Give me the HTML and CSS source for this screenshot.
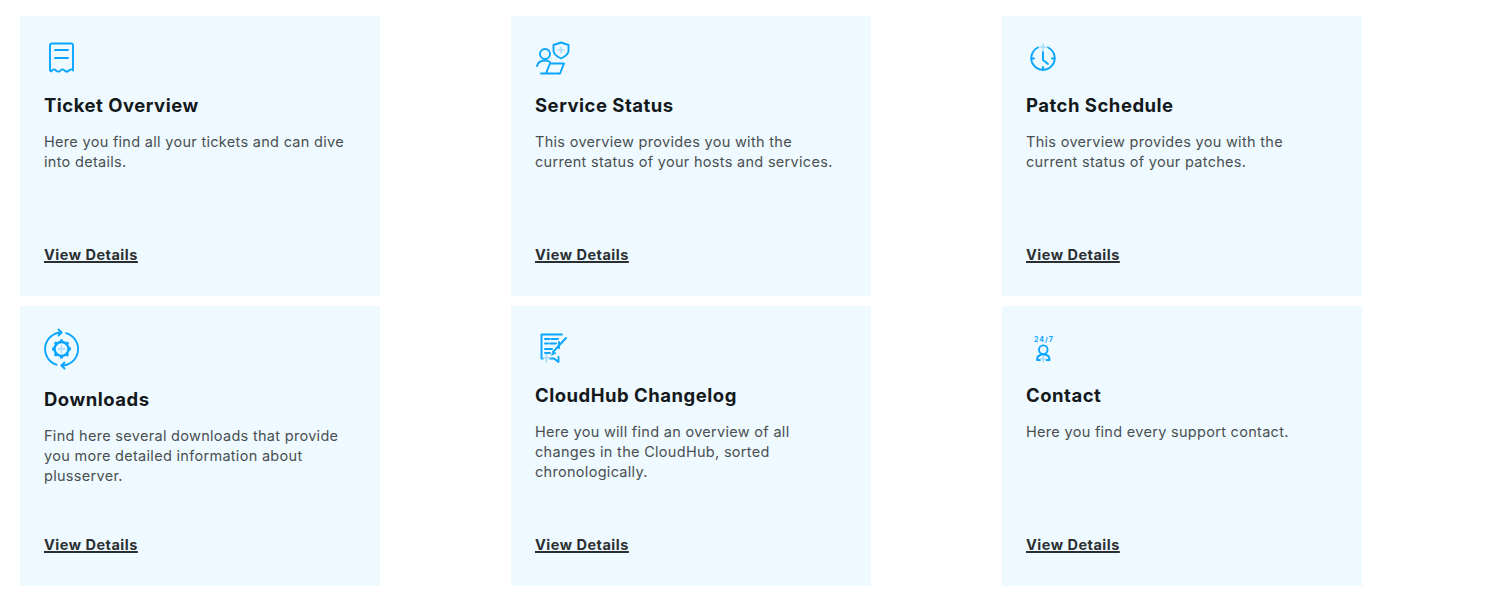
FILE: index.html
```html
<!DOCTYPE html>
<html lang="en">
<head>
<meta charset="utf-8">
<title>Support</title>
<link rel="stylesheet" href="styles.css">
</head>
<body>
<main class="grid">
  <article class="card">
    <svg class="icon" width="40" height="40" viewBox="0 0 40 40" fill="none"><path class="s" d="M6 29.500V4.500A2 2 0 0 1 8 2.500H27A2 2 0 0 1 29 4.500V29.500C28 28 26.500 28 25 29.500S22 31 20.500 29.500 17.500 28 16.500 29.500 13.500 31 12 29.500 9 28 8 29.500 6.800 30.500 6 29.500Z"/><path class="s" d="M11 9H24M11 17H24"/></svg>
    <h2>Ticket Overview</h2>
    <p>Here you find all your tickets and can dive into details.</p>
    <a href="#">View Details</a>
  </article>
  <article class="card">
    <svg class="icon" width="40" height="40" viewBox="0 0 40 40" fill="none"><circle class="s" cx="10" cy="13" r="5"/><path class="s" d="M2 25C3 21 6 19.500 10 19.500 12 19.500 13.500 20 15 21"/><path class="s" d="M15 22.500H29L25 32.500H11ZM6 32.500H11"/><path class="s" d="M26 1.500L33.500 4V9.500C33.500 13 30.500 15.500 26 17.500 21.500 15.500 18.500 13 18.500 9.500V4Z"/><path class="l" d="M26 6V12M23 9H29"/></svg>
    <h2>Service Status</h2>
    <p>This overview provides you with the current status of your hosts and services.</p>
    <a href="#">View Details</a>
  </article>
  <article class="card">
    <svg class="icon" width="40" height="40" viewBox="0 0 40 40" fill="none"><path class="s" d="M12 6.500A11.700 11.700 0 1 0 22 6.500"/><path class="s" d="M17 11V19L22 23M17 26V29M5.500 17.500H8M26 17.500H28.500"/><path class="l" d="M17 3V9M14 6H20"/></svg>
    <h2>Patch Schedule</h2>
    <p>This overview provides you with the current status of your patches.</p>
    <a href="#">View Details</a>
  </article>
  <article class="card">
    <svg class="icon tall" width="36" height="44" viewBox="0 0 36 44" fill="none"><path class="s" d="M12.500 34.700A16.500 16.500 0 0 1 17.500 2.500M22 3.100A16.500 16.500 0 0 1 17.500 35.500"/><path class="s" d="M14.500 -.500L17.500 2.500 14.500 5.500M20.500 32.500L17.500 35.500 20.500 38.500"/><circle class="g" cx="17.500" cy="19" r="7"/><path class="t" d="M17.500 9.500V12M17.500 26V28.500M8 19H10.500M24.500 19H27M10.800 12.300L12.500 14M22.500 24L24.200 25.700M24.200 12.300L22.500 14M12.500 24L10.800 25.700"/><path class="l" d="M17.500 15.500V22.500M14 19H21"/></svg>
    <h2>Downloads</h2>
    <p>Find here several downloads that provide you more detailed information about plusserver.</p>
    <a href="#">View Details</a>
  </article>
  <article class="card">
    <svg class="icon" width="40" height="40" viewBox="0 0 40 40" fill="none"><path class="s" d="M27 3.500H6.500V27.500H8M15 27.500H19L23.500 31V26M24 17V11"/><path class="s" d="M10 8H14.500M16.500 8H23M10 12.500H13M15 12.500H21M10 18H17M10 22H15"/><path class="s" d="M18 21L31 7M17 23.500L20 22"/><path class="l" d="M11.500 23.500V31M8 27H15"/></svg>
    <h2>CloudHub Changelog</h2>
    <p>Here you will find an overview of all changes in the CloudHub, sorted chronologically.</p>
    <a href="#">View Details</a>
  </article>
  <article class="card">
    <svg class="icon" width="40" height="40" viewBox="0 0 40 40" fill="none"><text class="hours" x="8" y="10.500">24/7</text><circle class="s" cx="17.300" cy="18.700" r="4.300"/><path class="s" d="M11 29C11 25.500 13.500 23.500 17.300 23.500S23.600 25.500 23.600 29H20.500M14 29H11"/><path class="l" d="M17.300 25V31M14.500 28H20"/></svg>
    <h2>Contact</h2>
    <p>Here you find every support contact.</p>
    <a href="#">View Details</a>
  </article>
</main>
</body>
</html>
```
FILE: styles.css
```css
* { box-sizing: border-box; }
body {
  margin: 0;
  background: #fff;
  font-family: "Inter", "Liberation Sans", sans-serif;
}
.grid {
  display: grid;
  grid-template-columns: repeat(3, 360px);
  grid-auto-rows: 280px;
  column-gap: 131px;
  row-gap: 10px;
  padding: 16px 20px;
}
.card {
  display: flex;
  flex-direction: column;
  align-items: flex-start;
  padding: 25px 24px 31px;
  background: #eefaff;
}
.icon { flex: none; display: block; overflow: visible; }
.icon.tall { margin-top: -1px; margin-bottom: 1px; }
.s { stroke: #0aa5ff; stroke-width: 1.900; stroke-linejoin: round; stroke-linecap: round; }
.g { stroke: #0aa5ff; stroke-width: 2.500; }
.t { stroke: #0aa5ff; stroke-width: 3; }
.l { stroke: #a8dcfb; stroke-width: 1.500; stroke-linecap: round; }
.hours { font: 700 7px "Inter", sans-serif; fill: #0aa5ff; letter-spacing: 1px; }
h2 {
  margin: 10px 0 13px;
  font-size: 18.500px;
  line-height: 28px;
  font-weight: 700;
  letter-spacing: .5px;
  color: #14191c;
}
p {
  margin: 0;
  font-size: 14.500px;
  line-height: 20px;
  letter-spacing: .3px;
  color: #4a4f52;
}
a {
  margin-top: auto;
  font-size: 14.500px;
  line-height: 20px;
  font-weight: 700;
  letter-spacing: .5px;
  color: #2b2f31;
  text-decoration: underline;
  text-decoration-thickness: 1.500px;
}
```
